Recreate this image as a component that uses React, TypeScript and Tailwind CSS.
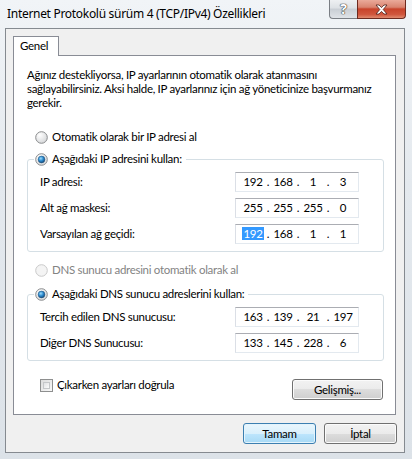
import { Fragment } from 'react'

const font = "font-['Lato',sans-serif] text-[11.5px] leading-[14px] tracking-[-0.3px] text-black"

function Radio({ checked, disabled }: { checked?: boolean; disabled?: boolean }) {
  return (
    <svg width="13" height="13" viewBox="0 0 13 13" className="shrink-0">
      <defs>
        <radialGradient id="rfill" cx="0.35" cy="0.3" r="0.8">
          <stop offset="0" stopColor="#ffffff" />
          <stop offset="1" stopColor="#d2d4d6" />
        </radialGradient>
        <radialGradient id="rdot" cx="0.4" cy="0.35" r="0.7">
          <stop offset="0" stopColor="#9fdcfa" />
          <stop offset="0.5" stopColor="#2c8bd0" />
          <stop offset="1" stopColor="#12426e" />
        </radialGradient>
      </defs>
      <circle
        cx="6.5"
        cy="6.5"
        r="5.8"
        fill={disabled ? '#f4f4f4' : 'url(#rfill)'}
        stroke={disabled ? '#c9c9c9' : '#8a8c8e'}
        strokeWidth="1"
      />
      {checked && <circle cx="6.5" cy="6.5" r="3.4" fill="url(#rdot)" stroke="#1d4f7a" strokeWidth="0.5" />}
    </svg>
  )
}

function Checkbox() {
  return (
    <div className="h-[13px] w-[13px] shrink-0 border border-[#8e8f8f] bg-[linear-gradient(135deg,#dcdcdc,#f8f8f8)] p-[2px]">
      <div className="h-full w-full border border-[#c5c7c9] bg-[linear-gradient(135deg,#e0e1e3,#fbfbfb)]" />
    </div>
  )
}

function IpField({ octets, selectFirst }: { octets: string[]; selectFirst?: boolean }) {
  return (
    <div className="flex h-[20px] w-[124px] items-center border border-[#e3e9ef] border-t-[#abadb3] border-l-[#dbdfe6] bg-white pl-[4px]">
      {octets.map((o, i) => (
        <Fragment key={i}>
          {i > 0 && <span className="w-[4px] text-center">.</span>}
          <span className="w-[26px] text-center">
            {selectFirst && i === 0 ? <span className="bg-[#3399ff] px-[1px] text-white">{o}</span> : o}
          </span>
        </Fragment>
      ))}
    </div>
  )
}

function Row({ label, octets, selectFirst }: { label: string; octets: string[]; selectFirst?: boolean }) {
  return (
    <div className="flex items-center justify-between">
      <span>{label}</span>
      <IpField octets={octets} selectFirst={selectFirst} />
    </div>
  )
}

function WinButton({ children, primary, className = '' }: { children: string; primary?: boolean; className?: string }) {
  const look = primary
    ? 'border-[#3c7fb1] bg-[linear-gradient(to_bottom,#eaf6fd_0%,#d9f0fc_50%,#bee6fd_50%,#a7d9f5_100%)] shadow-[inset_0_0_0_1px_#e4f4fc]'
    : 'border-[#707070] bg-[linear-gradient(to_bottom,#f2f2f2_0%,#ebebeb_50%,#dddddd_50%,#cfcfcf_100%)] shadow-[inset_0_0_0_1px_#fbfbfb]'
  return (
    <div className={`flex h-[21px] items-center justify-center rounded-[3px] border ${look} ${className}`}>
      <span className="font-['Lato',sans-serif] text-[11.5px] font-normal leading-[14px] tracking-[-0.3px] text-black">
        {children}
      </span>
    </div>
  )
}

function Group({ legend, children }: { legend: string; children: React.ReactNode }) {
  return (
    <fieldset className="ml-[13px] w-[357px] rounded-[3px] border border-[#d5dfe5]">
      <legend className="ml-[6px] pl-[1px] pr-[4px]">
        <span className="flex items-center gap-[4px]">
          <Radio checked />
          <span>{legend}</span>
        </span>
      </legend>
      <div className="mt-[6px] flex flex-col gap-[6px] pb-[7px] pl-[12px] pr-[24px]">{children}</div>
    </fieldset>
  )
}

export default function App() {
  return (
    <div className={`${font} flex h-[459px] w-[412px] flex-col overflow-hidden bg-[linear-gradient(to_bottom,#f1f4f7,#e4e9ee_40%,#dce2e8)]`}>
      {/* title bar */}
      <div className="flex h-[28px] shrink-0 items-start">
        <span className="pl-[7px] pt-[7px] font-['Noto_Sans',sans-serif] text-[12px] tracking-[-0.3px]">
          Internet Protokolü sürüm 4 (TCP/IPv4) Özellikleri
        </span>
        <div className="ml-auto mr-[6px] flex">
          <div className="flex h-[19px] w-[28px] items-center justify-center rounded-bl-[4px] border border-t-0 border-r-0 border-[#7a7e84] bg-[linear-gradient(to_bottom,#eef0f2,#dde1e5_45%,#c9ced4_50%,#dfe3e7)]">
            <span className="font-['Noto_Sans',sans-serif] text-[14px] font-bold leading-none text-white [text-shadow:0_0_1px_#333,0_0_1px_#333,0_0_1px_#333]">
              ?
            </span>
          </div>
          <div className="flex h-[19px] w-[49px] items-center justify-center rounded-br-[4px] border border-t-0 border-[#6d2a1f] bg-[linear-gradient(to_bottom,#eaaa9a,#d98470_40%,#c8432b_50%,#d0563d_80%,#e08a6f)]">
            <svg width="13" height="11" viewBox="0 0 13 11">
              <path
                d="M1 1 L4 1 L6.5 3.6 L9 1 L12 1 L8.2 5.5 L12 10 L9 10 L6.5 7.4 L4 10 L1 10 L4.8 5.5 Z"
                fill="#ffffff"
                stroke="#4a1d16"
                strokeWidth="0.8"
                strokeLinejoin="round"
              />
            </svg>
          </div>
        </div>
      </div>

      {/* client area */}
      <div className="ml-[5px] flex w-[400px] shrink-0 flex-col border border-[#858a90] bg-[#f0f0f0] pt-[7px] pb-[8px]">
        <div className="ml-[7px] flex">
          <div className="relative z-10 -mb-[1px] h-[20px] w-[46px] border border-b-0 border-[#898c95] bg-white pl-[6px] pt-[2px]">
            Genel
          </div>
        </div>
        <div className="ml-[7px] flex h-[360px] w-[383px] flex-col border border-[#898c95] bg-white">
          <p className="whitespace-nowrap pl-[13px] pt-[12px]">
            Ağınız destekliyorsa, IP ayarlarının otomatik olarak atanmasını
            <br />
            sağlayabilirsiniz. Aksi halde, IP ayarlarınız için ağ yöneticinize başvurmanız
            <br />
            gerekir.
          </p>

          <div className="mt-[20px] flex items-center gap-[4px] pl-[21px]">
            <Radio />
            <span>Otomatik olarak bir IP adresi al</span>
          </div>

          <div className="mt-[8px]">
            <Group legend="Aşağıdaki IP adresini kullan:">
              <Row label="IP adresi:" octets={['192', '168', '1', '3']} />
              <Row label="Alt ağ maskesi:" octets={['255', '255', '255', '0']} />
              <Row label="Varsayılan ağ geçidi:" octets={['192', '168', '1', '1']} selectFirst />
            </Group>
          </div>

          <div className="mt-[11px] flex items-center gap-[4px] pl-[21px] text-[#838383]">
            <Radio disabled />
            <span>DNS sunucu adresini otomatik olarak al</span>
          </div>

          <div className="mt-[10px]">
            <Group legend="Aşağıdaki DNS sunucu adreslerini kullan:">
              <Row label="Tercih edilen DNS sunucusu:" octets={['163', '139', '21', '197']} />
              <Row label="Diğer DNS Sunucusu:" octets={['133', '145', '228', '6']} />
            </Group>
          </div>

          <div className="mt-[17px] flex items-start justify-between pl-[26px] pr-[12px]">
            <div className="flex items-center gap-[4px]">
              <Checkbox />
              <span>Çıkarken ayarları doğrula</span>
            </div>
            <WinButton className="mt-[1px] w-[91px]">Gelişmiş...</WinButton>
          </div>
        </div>

        <div className="mt-[8px] flex justify-end gap-[8px] pr-[7px]">
          <WinButton primary className="w-[73px]">
            Tamam
          </WinButton>
          <WinButton className="w-[73px]">İptal</WinButton>
        </div>
      </div>
    </div>
  )
}
